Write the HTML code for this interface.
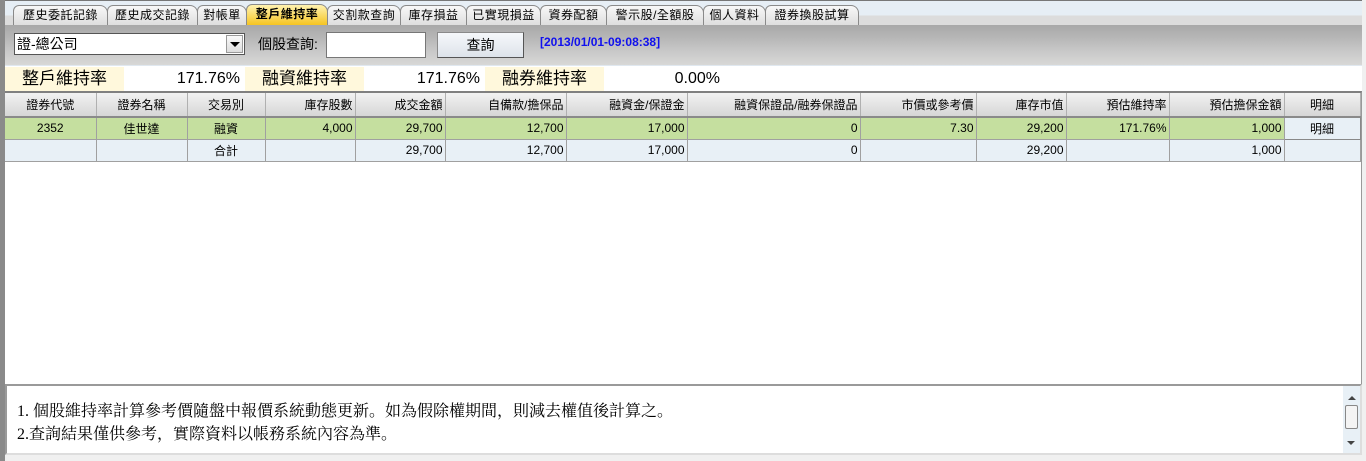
<!DOCTYPE html>
<html><head><meta charset="utf-8"><style>
*{box-sizing:border-box;margin:0;padding:0}
body{width:1366px;height:461px;overflow:hidden;background:#f0f0f0;font-family:"Liberation Sans","Noto Sans CJK TC",sans-serif;position:relative}
.abs{position:absolute}
#leftbar{left:0;top:0;width:5px;height:461px;background:#8a8a8a}
#tabbar{left:5px;top:0;width:1357px;height:25px;background:linear-gradient(#e6eef5 0,#e6eef5 14px,#dcdcdc 15px,#dcdcdc 24px,#7d7d9a 24px);border-top:1px solid #777}
.tab{position:absolute;top:4px;height:20px;font-size:12px;line-height:19px;color:#000;text-align:center;background:linear-gradient(#f8f8f8,#dedede);border:1px solid #8a8a8a;border-bottom:none;border-radius:6px 8px 0 0;letter-spacing:0.5px}
.tab.on{background:linear-gradient(#fff2b0,#f5c21a);font-weight:bold;top:3px;height:22px}
#graybar{left:5px;top:25px;width:1357px;height:40px;background:linear-gradient(#a8a8a8 0,#b8b8b8 35%,#c8c8c8 65%,#d8d8d6 100%)}
#ratios{left:5px;top:65px;width:1357px;height:26px;background:#fff;border-top:1px solid #e0e8f0}
.lab{position:absolute;top:1px;height:24px;background:#fff8dc;font-size:17px;line-height:24px;text-align:center;color:#000}
.val{position:absolute;top:1px;height:24px;font-size:16px;line-height:24px;text-align:right;color:#000}
#grid{left:5px;top:91px;width:1357px;height:293px;background:#fff;border-top:2px solid #808080;border-right:1px solid #999}
table{border-collapse:collapse;table-layout:fixed;font-size:12px;position:absolute;left:0;top:0}
td,th{height:22px;border-right:1px solid #a0a0a0;border-bottom:1px solid #a0a0a0;padding:0 2px;white-space:nowrap;overflow:hidden;font-weight:normal;text-align:right}
th{height:24px;background:linear-gradient(#f2f2f2,#d6d6d6);border-right:1px solid #b0b0b0;border-bottom:2px solid #8a8a8a}
tr.g td{background:#c5df9f}
tr.s td{background:#e8f0f6}
.c{text-align:center}
#notes{left:5px;top:384px;width:1357px;height:71px;background:#fff;border:2px solid #9a9a9a;border-right-color:#ddd;border-bottom-color:#ddd}
#notes p{font-size:16px;line-height:23px;margin-left:10px;color:#000;font-family:"Liberation Serif","Noto Serif CJK SC",serif}
#sb{right:0;top:0;width:17px;height:67px;background:#e8f0f6}
</style></head><body>
<div class="abs" id="leftbar"></div>
<div class="abs" id="tabbar">
<div class="tab" style="left:8px;width:95px">歷史委託記錄</div>
<div class="tab" style="left:102px;width:91px">歷史成交記錄</div>
<div class="tab" style="left:192px;width:50px">對帳單</div>
<div class="tab on" style="left:241px;width:82px">整戶維持率</div>
<div class="tab" style="left:322px;width:74px">交割款查詢</div>
<div class="tab" style="left:395px;width:67px">庫存損益</div>
<div class="tab" style="left:461px;width:75px">已實現損益</div>
<div class="tab" style="left:535px;width:67px">資券配額</div>
<div class="tab" style="left:601px;width:98px">警示股/全額股</div>
<div class="tab" style="left:698px;width:63px">個人資料</div>
<div class="tab" style="left:760px;width:94px">證券換股試算</div>
</div>
<div class="abs" id="graybar">
<div class="abs" style="left:9px;top:8px;width:231px;height:22px;background:#fff;border:1px solid #555;font-size:14px;line-height:20px;padding-left:2px">證-總公司
<div class="abs" style="right:1px;top:1px;width:17px;height:18px;background:linear-gradient(#fafafa,#ddd);border:1px solid #999"><div style="margin:6px auto 0;width:0;height:0;border-left:5px solid transparent;border-right:5px solid transparent;border-top:5px solid #000"></div></div></div>
<div class="abs" style="left:253px;top:9px;font-size:14px;line-height:20px">個股查詢:</div>
<div class="abs" style="left:321px;top:7px;width:100px;height:26px;background:#fff;border:1px solid #777"></div>
<div class="abs" style="left:432px;top:7px;width:87px;height:26px;background:linear-gradient(#f6f8fb,#dde3ea);border:1px solid #8a8a8a;border-right-color:#555;border-bottom-color:#555;font-size:14px;line-height:24px;text-align:center">查詢</div>
<div class="abs" style="left:535px;top:10px;font-size:12px;font-weight:bold;color:#1010ee">[2013/01/01-09:08:38]</div>
</div>
<div class="abs" id="ratios">
<div class="lab" style="left:0;width:119px">整戶維持率</div>
<div class="val" style="left:121px;width:114px">171.76%</div>
<div class="lab" style="left:240px;width:119px">融資維持率</div>
<div class="val" style="left:361px;width:114px">171.76%</div>
<div class="lab" style="left:480px;width:119px">融券維持率</div>
<div class="val" style="left:601px;width:114px">0.00%</div>
</div>
<div class="abs" id="grid">
<table>
<colgroup><col style="width:91px"><col style="width:91px"><col style="width:78px"><col style="width:90px"><col style="width:90px"><col style="width:121px"><col style="width:121px"><col style="width:173px"><col style="width:116px"><col style="width:90px"><col style="width:103px"><col style="width:115px"><col style="width:76px"></colgroup>
<tr><th class="c">證券代號</th><th class="c">證券名稱</th><th class="c">交易別</th><th>庫存股數</th><th>成交金額</th><th>自備款/擔保品</th><th>融資金/保證金</th><th>融資保證品/融券保證品</th><th>市價或參考價</th><th>庫存市值</th><th>預估維持率</th><th>預估擔保金額</th><th class="c">明細</th></tr>
<tr class="g"><td class="c">2352</td><td class="c">佳世達</td><td class="c">融資</td><td>4,000</td><td>29,700</td><td>12,700</td><td>17,000</td><td>0</td><td>7.30</td><td>29,200</td><td>171.76%</td><td>1,000</td><td class="c" style="background:#e8f0f6;border:1px solid #fff;border-right-color:#888;border-bottom-color:#888">明細</td></tr>
<tr class="s"><td></td><td></td><td class="c">合計</td><td></td><td>29,700</td><td>12,700</td><td>17,000</td><td>0</td><td></td><td>29,200</td><td></td><td>1,000</td><td></td></tr>
</table>
</div>
<div class="abs" id="notes">
<p style="margin-top:14px">1. 個股維持率計算參考價隨盤中報價系統動態更新。如為假除權期間，則減去權值後計算之。</p>
<p>2.查詢結果僅供參考，實際資料以帳務系統內容為準。</p>
<div class="abs" id="sb">
<div style="margin:10px auto 0;width:0;height:0;border-left:4px solid transparent;border-right:4px solid transparent;border-bottom:4px solid #444"></div>
<div style="position:absolute;left:2px;top:19px;width:13px;height:24px;border:1px solid #888;border-radius:2px;background:#f4f4f4"></div>
<div style="position:absolute;left:4px;bottom:8px;width:0;height:0;border-left:4px solid transparent;border-right:4px solid transparent;border-top:4px solid #444"></div>
</div>
</div>
</body></html>
